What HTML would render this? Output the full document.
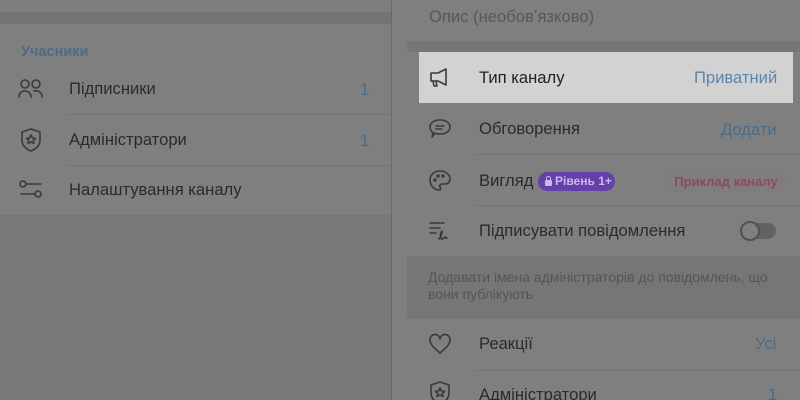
<!DOCTYPE html>
<html><head><meta charset="utf-8"><style>
*{margin:0;padding:0;box-sizing:border-box}
html,body{width:800px;height:400px;overflow:hidden}
body{background:#787878;font-family:"Liberation Sans","DejaVu Sans",sans-serif;position:relative;color:#2b2b2b}
.a{position:absolute}
.t{position:absolute;font-size:16.6px;white-space:nowrap}
.b{color:#4b6b86}
svg{position:absolute;fill:none;stroke:#3a3a3a;stroke-width:1.6;stroke-linecap:round;stroke-linejoin:round}
.sep{position:absolute;height:1px;background:#747474}
</style></head><body>
<div class="a" style="left:0;top:0;width:391px;height:12px;background:#7e7e7e"></div>
<div class="a" style="left:0;top:12px;width:391px;height:12px;background:#737373"></div>
<div class="a" style="left:0;top:24px;width:391px;height:191px;background:#7f7f7f"></div>
<div class="t b" style="left:21px;top:44px;font-size:14.5px;font-weight:bold">Учасники</div>
<svg style="left:18px;top:78px" width="26" height="22" viewBox="0 0 26 22"><circle cx="7" cy="6" r="4"/><path d="M1 19c0-4 3-6 6-6s6 2 6 6"/><circle cx="18" cy="6" r="4"/><path d="M16 13c4-1 8 1 8 6"/></svg>
<div class="t" style="left:69px;top:79px">Підписники</div>
<div class="t b" style="left:360px;top:80px">1</div>
<div class="sep" style="left:66px;top:114px;width:325px"></div>
<svg style="left:19px;top:127px" width="24" height="26" viewBox="0 0 24 26"><path d="M12 2l9 3v8c0 6-4 9-9 11-5-2-9-5-9-11V5z"/><path d="M12 8l1.5 3 3 .4-2.2 2 .6 3-2.9-1.5-2.9 1.5.6-3-2.2-2 3-.4z"/></svg>
<div class="t" style="left:69px;top:130px">Адміністратори</div>
<div class="t b" style="left:360px;top:131px">1</div>
<div class="sep" style="left:66px;top:165px;width:325px"></div>
<svg style="left:19px;top:179px" width="24" height="22" viewBox="0 0 24 22"><circle cx="4" cy="5" r="3"/><path d="M7 5h15"/><circle cx="19" cy="15" r="3"/><path d="M2 15h14"/></svg>
<div class="t" style="left:69px;top:180px">Налаштування каналу</div>
<div class="a" style="left:392px;top:0;width:408px;height:400px;background:#7f7f7f"></div>
<div class="a" style="left:391px;top:0;width:1px;height:400px;background:#6a6a6a"></div>
<div class="t" style="left:429px;top:7px;color:#575757">Опис (необовʼязково)</div>
<div class="a" style="left:407px;top:41px;width:393px;height:11px;background:#767676"></div>
<div class="a" style="left:419px;top:52px;width:374px;height:51px;background:#d2d2d2"></div>
<svg style="left:428px;top:66px" width="24" height="24" viewBox="0 0 24 24"><path d="M3 7h7l8-4v16l-8-4H3z"/><path d="M5 15l1 5h3l-1-5"/></svg>
<div class="t" style="left:479px;top:68px;color:#222">Тип каналу</div>
<div class="t" style="left:694px;top:68px;color:#5a86ab">Приватний</div>
<svg style="left:428px;top:117px" width="24" height="24" viewBox="0 0 24 24"><path d="M4 20l1-4C3 14 2 12 2 10c0-4 4-7 10-7s10 3 10 7-4 7-10 7c-2 0-4 0-5-1z"/><path d="M8 9h8M8 12h6"/></svg>
<div class="t" style="left:479px;top:119px">Обговорення</div>
<div class="t b" style="left:721px;top:120px">Додати</div>
<div class="sep" style="left:474px;top:154px;width:326px"></div>
<svg style="left:428px;top:169px" width="24" height="24" viewBox="0 0 24 24"><path d="M12 2C6 2 2 6 2 11c0 5 4 10 9 10 2 0 2-2 1-3s0-3 2-3h3c3 0 5-2 5-5 0-4-4-8-10-8z"/><circle cx="7" cy="11" r="1"/><circle cx="10" cy="7" r="1"/><circle cx="15" cy="7" r="1"/></svg>
<div class="t" style="left:479px;top:171px">Вигляд</div>
<div class="a" style="left:538px;top:172px;width:77px;height:19px;border-radius:10px;background:#6440a8;color:#c9b8ea;font-size:12px;font-weight:bold;line-height:19px;padding-left:17px;white-space:nowrap">Рівень 1+</div>
<div class="a" style="left:545px;top:180px;width:7px;height:6px;background:#c9b8ea;border-radius:1px"></div>
<div class="a" style="left:546px;top:176px;width:5px;height:6px;border:1.5px solid #c9b8ea;border-radius:3px 3px 0 0"></div>
<div class="a" style="left:666px;top:170px;width:120px;height:23px;border-radius:12px;background:#827c7d;color:#8a4a60;font-size:13px;line-height:23px;text-align:center;font-weight:bold">Приклад каналу</div>
<div class="sep" style="left:474px;top:205px;width:326px"></div>
<svg style="left:428px;top:220px" width="26" height="22" viewBox="0 0 26 22"><path d="M2 3h14M2 8h10M2 13h6"/><path d="M11 19c2-3 4-8 3-8s-2 4-1 7 3-1 4-1 0 2 2 1"/></svg>
<div class="t" style="left:479px;top:221px">Підписувати повідомлення</div>
<div class="a" style="left:741px;top:223px;width:35px;height:16px;border-radius:8px;background:#626262"></div>
<div class="a" style="left:740px;top:221px;width:20px;height:20px;border-radius:50%;background:#7f7f7f;border:2px solid #505050"></div>
<div class="a" style="left:407px;top:256px;width:393px;height:63px;background:#767676"></div>
<div class="t" style="left:428px;top:269px;font-size:14px;color:#555">Додавати імена адміністраторів до повідомлень, що</div>
<div class="t" style="left:428px;top:286px;font-size:14px;color:#555">вони публікують</div>
<svg style="left:428px;top:332px" width="24" height="24" viewBox="0 0 24 24"><path d="M12 21C5 15 2 12 2 8a5 5 0 0 1 10-1 5 5 0 0 1 10 1c0 4-3 7-10 13z"/></svg>
<div class="t" style="left:479px;top:334px">Реакції</div>
<div class="t b" style="left:755px;top:334px">Усі</div>
<div class="sep" style="left:474px;top:370px;width:326px"></div>
<svg style="left:428px;top:380px" width="24" height="26" viewBox="0 0 24 26"><path d="M12 2l9 3v8c0 6-4 9-9 11-5-2-9-5-9-11V5z"/><path d="M12 8l1.5 3 3 .4-2.2 2 .6 3-2.9-1.5-2.9 1.5.6-3-2.2-2 3-.4z"/></svg>
<div class="t" style="left:479px;top:385px">Адміністратори</div>
<div class="t b" style="left:768px;top:385px">1</div>
</body></html>
